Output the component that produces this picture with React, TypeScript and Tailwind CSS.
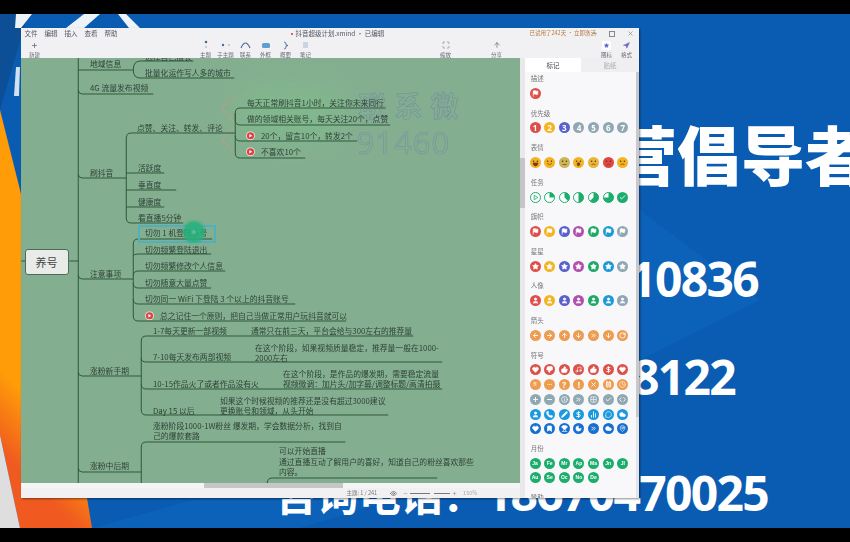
import { ReactNode } from 'react';
import {
  ArrowDown, ArrowLeft, ArrowRight, ArrowUp, BarChart2, Bookmark, Check, ChevronsRight, Clock, Cloud, Code,
  DollarSign, Eye, Flag, Grid2x2, Heart, Info, Maximize, MapPin, MessageCircle, Minus, Moon, Music, Navigation,
  Pause, Pencil, Phone, Plus, RotateCw, Star, ThumbsDown, ThumbsUp, Trophy, User, X,
} from 'lucide-react';

const cjk = "font-['Noto_Sans_CJK_SC','Noto_Sans',sans-serif]";

const RAINBOW = ['#df4f4a', '#f4b320', '#5a60cc', '#b04fae', '#1fa967', '#1c9ad8', '#8ea7b2'];
const RED = '#dc5149';
const ORANGE = '#ee9c50';
const GRAY = '#8fa8b2';
const BLUE = '#1a98e0';
const NAVY = '#1670d0';
const GREEN = '#1cad6c';

type MapText = { x: number; y: number; lines: string[]; mark?: boolean };

const TEXTS: MapText[] = [
  { x: 145, y: 57, lines: ['选择自己擅长'] },
  { x: 90, y: 64, lines: ['地域信息'] },
  { x: 145, y: 73, lines: ['批量化运作写人多的城市'] },
  { x: 90, y: 88, lines: ['4G 流量发布视频'] },
  { x: 247, y: 103, lines: ['每天正常刷抖音1小时，关注你未来同行'] },
  { x: 247, y: 119, lines: ['做的领域相关账号，每天关注20个，点赞'] },
  { x: 137, y: 128, lines: ['点赞、关注、转发、评论'] },
  { x: 261, y: 136, lines: ['20个，留言10个，转发2个'], mark: true },
  { x: 261, y: 152, lines: ['不喜欢10个'], mark: true },
  { x: 138, y: 168, lines: ['活跃度'] },
  { x: 90, y: 173, lines: ['刷抖音'] },
  { x: 138, y: 185, lines: ['垂直度'] },
  { x: 138, y: 202, lines: ['健康度'] },
  { x: 138, y: 218, lines: ['看直播5分钟'] },
  { x: 145, y: 233, lines: ['切勿 1 机登陆多号'] },
  { x: 145, y: 250, lines: ['切勿频繁登陆退出'] },
  { x: 145, y: 266, lines: ['切勿频繁修改个人信息'] },
  { x: 90, y: 274, lines: ['注意事项'] },
  { x: 145, y: 283, lines: ['切勿随意大量点赞'] },
  { x: 145, y: 299, lines: ['切勿同一 WiFi 下登陆 3 个以上的抖音账号'] },
  { x: 160, y: 315.5, lines: ['总之记住一个原则，把自己当做正常用户玩抖音就可以'], mark: true },
  { x: 153, y: 331, lines: ['1-7每天更新一部视频'] },
  { x: 251, y: 331, lines: ['通常只在前三天，平台会给与300左右的推荐量'] },
  { x: 255, y: 352.5, lines: ['在这个阶段，如果视频质量稳定，推荐量一般在1000-', '2000左右'] },
  { x: 153, y: 357, lines: ['7-10每天发布两部视频'] },
  { x: 90, y: 371, lines: ['涨粉新手期'] },
  { x: 283, y: 378.5, lines: ['在这个阶段，是作品的爆发期，需要稳定流量', '视频微调：加片头/加字幕/调整标题/高清拍摄'] },
  { x: 153, y: 384, lines: ['10-15作品火了或者作品没有火'] },
  { x: 220, y: 405.5, lines: ['如果这个时候视频的推荐还是没有超过3000建议', '更换账号和领域，从头开始'] },
  { x: 153, y: 411, lines: ['Day 15 以后'] },
  { x: 153, y: 430.5, lines: ['涨粉阶段1000-1W粉丝 爆发期，学会数据分析，找到自', '己的爆款套路'] },
  { x: 279, y: 462, lines: ['可以开始直播', '通过直播互动了解用户的喜好，知道自己的粉丝喜欢那些', '内容。'] },
  { x: 90, y: 466, lines: ['涨粉中后期'] },
];

const LINES = [
  'M78 58V484',
  'M69 261H78',
  'M21 261H25',
  'M78 70H133',
  'M133 70Q133 61 140 61H193',
  'M133 70Q133 78 140 78H234',
  'M78 90Q78 94 82 94H153',
  'M78 174Q78 178 82 178H126',
  'M126 178V138Q126 133 131 133H234',
  'M126 173H164',
  'M126 190H176',
  'M126 207H164',
  'M126 178V218Q126 223 131 223H183',
  'M234 133H235V113Q235 108 240 108H385',
  'M235 113V120Q235 125 240 125H390',
  'M235 133V136Q235 141 240 141H357',
  'M235 136V153Q235 158 240 158H305',
  'M78 275Q78 279 82 279H133',
  'M133 279V244Q133 239 138 239H212',
  'M133 256Q133 254 138 254H211',
  'M133 276Q133 271 138 271H225',
  'M133 283Q133 288 138 288H211',
  'M133 299Q133 304 138 304H295',
  'M133 279V316Q133 321 138 321H346',
  'M78 372Q78 376 82 376H141',
  'M141 376V341Q141 336 146 336H413',
  'M141 358Q141 362 146 362H442',
  'M141 384Q141 389 146 389H442',
  'M141 376V410Q141 415 146 415H388',
  'M78 468Q78 472 82 472H141',
  'M141 484V447Q141 442 146 442H345',
  'M267 484V483Q267 478 272 478H437',
];

const Dot = ({ color, children }: { color: string; children?: ReactNode }) => (
  <div className="flex h-[11px] w-[11px] items-center justify-center rounded-full text-white" style={{ backgroundColor: color }}>
    {children}
  </div>
);

const Num = ({ children }: { children: ReactNode }) => (
  <span className="text-[8px] leading-none font-bold font-['Open_Sans',sans-serif]">{children}</span>
);

const Small = ({ children }: { children: ReactNode }) => (
  <span className="text-[5px] leading-none font-bold font-['Liberation_Sans',sans-serif]">{children}</span>
);

const Face = ({ color = '#f4b320', mouth, smile = true }: { color?: string; mouth: string; smile?: boolean }) => (
  <svg width="11" height="11" viewBox="0 0 11 11">
    <circle cx="5.5" cy="5.5" r="5.5" fill={color} />
    <circle cx="3.6" cy="4.2" r="0.8" fill="#5a3a10" />
    <circle cx="7.4" cy="4.2" r="0.8" fill="#5a3a10" />
    <path d={mouth} fill={smile ? '#7a3a18' : 'none'} stroke="#7a3a18" strokeWidth="0.7" />
  </svg>
);

const Pie = ({ part }: { part: number }) => {
  const a = part * 2 * Math.PI;
  const x = 5.5 + 5 * Math.sin(a);
  const y = 5.5 - 5 * Math.cos(a);
  return (
    <svg width="11" height="11" viewBox="0 0 11 11">
      <circle cx="5.5" cy="5.5" r="5" fill="#fff" stroke={GREEN} strokeWidth="1" />
      <path d={`M5.5 5.5V.5A5 5 0 ${part > 0.5 ? 1 : 0} 1 ${x} ${y}Z`} fill={GREEN} />
    </svg>
  );
};

const ic = { size: 7, strokeWidth: 3 };
const fill = { size: 7, strokeWidth: 2, fill: '#fff' };

const rainbow = (node: ReactNode) => RAINBOW.map((c, i) => <Dot key={i} color={c}>{node}</Dot>);
const solid = (color: string, nodes: ReactNode[]) => nodes.map((n, i) => <Dot key={i} color={color}>{n}</Dot>);

const SECTIONS: { label: string; items: ReactNode[] }[] = [
  { label: '描述', items: [<Dot key="f" color={RED}><Flag {...fill} /></Dot>] },
  {
    label: '优先级',
    items: ['#df4f4a', '#f4b320', '#5a60cc', GRAY, GRAY, GRAY, GRAY].map((c, i) => (
      <Dot key={i} color={c}><Num>{i + 1}</Num></Dot>
    )),
  },
  {
    label: '表情',
    items: [
      <Face key="1" mouth="M3 6H8Q7.5 9 5.5 9T3 6Z" />,
      <Face key="2" mouth="M3.2 6.5Q5.5 8.6 7.8 6.5" smile={false} />,
      <Face key="3" color="#cbb45a" mouth="M3.5 7.5H7.5" smile={false} />,
      <Face key="4" mouth="M4.2 7.2A1.3 1.6 0 1 0 6.8 7.2A1.3 1.6 0 1 0 4.2 7.2Z" />,
      <Face key="5" color="#e7b53c" mouth="M3.5 7.6Q5.5 6.4 7.5 7.6" smile={false} />,
      <Face key="6" color="#e2453f" mouth="M3.5 8Q5.5 6.4 7.5 8" smile={false} />,
      <Face key="7" mouth="M3.5 7.2H7.5" smile={false} />,
    ],
  },
  {
    label: '任务',
    items: [
      <svg key="0" width="11" height="11" viewBox="0 0 11 11">
        <circle cx="5.5" cy="5.5" r="5" fill="#fff" stroke={GREEN} strokeWidth="1" />
        <path d="M4.2 3.2L7.8 5.5L4.2 7.8Z" fill="none" stroke={GREEN} strokeWidth="0.8" />
      </svg>,
      <Pie key="1" part={0.25} />,
      <Pie key="2" part={0.375} />,
      <Pie key="3" part={0.5} />,
      <Pie key="4" part={0.625} />,
      <Pie key="5" part={0.75} />,
      <Dot key="6" color={GREEN}><Check {...ic} /></Dot>,
    ],
  },
  { label: '旗帜', items: rainbow(<Flag {...fill} />) },
  { label: '星星', items: rainbow(<Star {...fill} />) },
  { label: '人像', items: rainbow(<User {...fill} />) },
  {
    label: '箭头',
    items: solid(ORANGE, [
      <ArrowLeft key="1" {...ic} />, <ArrowRight key="2" {...ic} />, <ArrowUp key="3" {...ic} />, <ArrowDown key="4" {...ic} />,
      <ChevronsRight key="5" {...ic} />, <ArrowDown key="6" {...ic} />, <RotateCw key="7" {...ic} />,
    ]),
  },
  {
    label: '符号',
    items: [
      ...solid(RED, [
        <Heart key="1" {...fill} />, <ThumbsDown key="2" {...fill} />, <ThumbsUp key="3" {...fill} />, <Music key="4" {...ic} strokeWidth={2} />,
        <ThumbsUp key="5" {...fill} />, <DollarSign key="6" {...ic} />, <Heart key="7" {...fill} />,
      ]),
      ...solid(ORANGE, [
        <Small key="1">!!</Small>, <Small key="2">···</Small>, <Num key="3">?</Num>, <Num key="4">!</Num>,
        <X key="5" {...ic} />, <Pause key="6" {...ic} />, <Clock key="7" size={7} strokeWidth={2} />,
      ]),
      ...solid(GRAY, [
        <Plus key="1" {...ic} />, <Minus key="2" {...ic} />, <Info key="3" size={7} strokeWidth={2.5} />, <ChevronsRight key="4" {...ic} />,
        <Grid2x2 key="5" size={7} strokeWidth={2} />, <Check key="6" {...ic} />, <Code key="7" {...ic} />,
      ]),
      ...solid(BLUE, [
        <User key="1" {...fill} />, <Phone key="2" {...fill} />, <Pencil key="3" {...fill} />, <DollarSign key="4" {...ic} />,
        <BarChart2 key="5" {...ic} />, <MessageCircle key="6" {...ic} strokeWidth={2} />, <Cloud key="7" {...fill} />,
      ]),
      ...solid(NAVY, [
        <Heart key="1" {...fill} />, <Bookmark key="2" {...fill} />, <Trophy key="3" {...fill} />, <Moon key="4" {...fill} />,
        <ChevronsRight key="5" {...ic} />, <Cloud key="6" {...fill} />, <MapPin key="7" {...ic} strokeWidth={2} />,
      ]),
    ],
  },
  {
    label: '月份',
    items: ['Ja', 'Fe', 'Mr', 'Ap', 'Ma', 'Jn', 'Jl', 'Au', 'Se', 'Oc', 'No', 'De'].map((m) => (
      <Dot key={m} color={GREEN}><Small>{m}</Small></Dot>
    )),
  },
  { label: '赞助', items: [] },
];

const Tool = ({ label, icon, className = '' }: { label: string; icon: ReactNode; className?: string }) => (
  <div className={`flex w-[20px] shrink-0 flex-col items-center ${className}`}>
    <div className="flex h-[10px] items-center justify-center text-[#56657a]">{icon}</div>
    <span className="mt-[2px] text-[5.5px] leading-[6px] whitespace-nowrap text-[#667]">{label}</span>
  </div>
);

const Mark = () => (
  <svg width="9" height="9" viewBox="0 0 9 9" className="absolute top-1/2 -left-[15px] -translate-y-1/2">
    <circle cx="4.5" cy="4.5" r="4.5" fill="#e8dcd0" />
    <circle cx="4.5" cy="4.5" r="3.6" fill="#dc4347" />
    <path d="M3.4 2.7L6.2 4.5L3.4 6.3Z" fill="#fff" />
  </svg>
);

const MindMap = () => (
  <div className="relative h-full w-full overflow-hidden bg-[#84ae90]">
    {/* faded watermark blobs */}
    <div className="absolute top-[25px] left-[215px] h-[60px] w-[110px] rounded-full bg-[#7fc48a] opacity-40 blur-md" />
    <svg viewBox="21 58 499 425" className="absolute inset-0 h-full w-full" fill="none">
      <path d="M234 95L222 108L234 122M236 125L222 140L236 155" stroke="#c99a80" strokeWidth="1.5" opacity="0.5" />
      {LINES.map((d, i) => (
        <path key={i} d={d} stroke="#2c5a3a" strokeWidth="1" />
      ))}
    </svg>
    <div className="absolute top-[167px] left-[117px] h-[18px] w-[78px] border-2 border-[#4fb0c0]" />
    <div className={`absolute top-[33px] left-[338px] flex gap-[8px] text-[28px] leading-none font-bold text-transparent opacity-60 [-webkit-text-stroke:0.7px_#6b7fa8] ${cjk}`}>
      <span>联</span><span>系</span><span>微</span>
    </div>
    <div className="absolute top-[69px] left-[336px] text-[31px] leading-none tracking-[1px] text-transparent opacity-70 [-webkit-text-stroke:0.7px_#708aa4] font-['Open_Sans',sans-serif]">
      91460
    </div>
    {TEXTS.map((t) => (
      <div
        key={t.lines[0]}
        className={`absolute -translate-y-1/2 text-[7.8px] leading-[10.5px] whitespace-nowrap text-[#2e4236] ${cjk}`}
        style={{ left: t.x - 20.5, top: t.y - 58 }}
      >
        {t.mark && <Mark />}
        {t.lines.map((l) => (
          <div key={l}>{l}</div>
        ))}
      </div>
    ))}
    <div className="absolute top-[163px] left-[162px] flex h-[22px] w-[22px] items-center justify-center rounded-full bg-[#22b27c]/85 blur-[1px]">
      <div className="h-[2px] w-[2px] rounded-full bg-white" />
    </div>
    <div className={`absolute top-[191px] left-[4px] flex h-[26px] w-[44px] items-center justify-center rounded-[3px] border border-[#4f6a58] bg-[#e9ebe8] text-[11px] text-[#444] ${cjk}`}>
      养号
    </div>
  </div>
);

const Sidebar = () => (
  <div className="flex w-[114px] shrink-0 flex-col bg-[#f8f8fa]">
    <div className="flex h-[14px] shrink-0 bg-[#efeff1] text-[6.5px] leading-[14px]">
      <div className="w-[56px] bg-white text-center text-[#444]">标记</div>
      <div className="flex-1 text-center text-[#aaa]">贴纸</div>
    </div>
    <div className="flex min-h-0 flex-1 overflow-hidden">
      <div className="min-w-0 flex-1 pt-[1px] pl-[2.7px]">
        {SECTIONS.map((s) => (
          <div key={s.label} className="pb-[6.9px]">
            <div className="h-[10px] pl-[3px] text-[6.5px] leading-[10px] text-[#777]">{s.label}</div>
            <div className="grid grid-cols-[repeat(7,14.65px)] auto-rows-[14.7px] place-items-center pt-[3px]">{s.items}</div>
          </div>
        ))}
      </div>
      <div className="w-[3px] shrink-0 bg-[#e4e4e6]">
        <div className="h-[345px] bg-[#c9c9cc]" />
      </div>
    </div>
  </div>
);

const Window = () => (
  <div className={`absolute top-[28px] left-[20.5px] flex h-[470px] w-[618.5px] flex-col bg-[#f1f1f3] shadow-[1px_1px_2px_rgba(0,0,0,0.45)] blur-[0.35px] ${cjk}`}>
    <div className="flex h-[11px] shrink-0 items-center text-[6.5px] whitespace-nowrap text-[#556]">
      <div className="flex w-[270px] shrink-0 gap-[7px] pl-[4px]">
        <span>文件</span><span>编辑</span><span>插入</span><span>查看</span><span>帮助</span>
      </div>
      <div className="flex w-[239px] shrink-0 items-center gap-[3px]">
        <div className="h-[2px] w-[2px] rounded-full bg-[#d33]" />
        <span>抖音超级计划.xmind · 已编辑</span>
      </div>
      <span className="w-[60px] shrink-0 text-[5.5px] text-[#b8783a]">已试用了242天 · 立即激活</span>
      <Minus size={7} className="ml-[1px] text-[#777]" />
      <div className="ml-[11px] h-[6px] w-[6px] border border-[#888]" />
      <X size={7} className="ml-[12px] text-[#777]" />
    </div>
    <div className="flex h-[19px] shrink-0 items-start pt-[1px] pl-[4px]">
      <Tool label="新建" icon={<Plus size={7} strokeWidth={2.5} />} />
      <Tool className="ml-[151px]" label="主题" icon={<svg width="8" height="10"><circle cx="4" cy="2" r="1.3" fill="#4a6d96" /><circle cx="4" cy="7" r="1" fill="#b5c0cc" /></svg>} />
      <Tool label="子主题" icon={<svg width="12" height="8"><circle cx="3" cy="4" r="1.2" fill="#4a6d96" /><circle cx="9" cy="4" r="1" fill="#b5c0cc" /></svg>} />
      <Tool label="联系" icon={<svg width="11" height="8" fill="none"><path d="M1 7Q5.5 -3 10 7" stroke="#4a6d96" strokeWidth="1.2" /></svg>} />
      <Tool label="外框" icon={<svg width="10" height="7"><rect x="1" y="1" width="8" height="5" rx="1.5" fill="#5f9fd0" /></svg>} />
      <Tool label="概要" icon={<svg width="6" height="9" fill="none"><path d="M1 1Q3 1 3 3V4L5 4.5L3 5V6Q3 8 1 8" stroke="#4a6d96" strokeWidth="0.9" /></svg>} />
      <Tool label="笔记" icon={<svg width="7" height="8"><rect x="1" y="1" width="5" height="6" fill="#c9d6e2" /></svg>} />
      <Tool className="ml-[120px]" label="缩放" icon={<Maximize size={8} strokeWidth={1.5} />} />
      <Tool className="ml-[31px]" label="分享" icon={<ArrowUp size={8} strokeWidth={2} />} />
      <Tool className="ml-[90px]" label="图标" icon={<div className="flex h-[9px] w-[9px] items-center justify-center rounded-[1px] bg-white"><Star size={5} fill="#5a60cc" stroke="#5a60cc" /></div>} />
      <Tool label="格式" icon={<Navigation size={7} fill="#6a66c8" stroke="#6a66c8" />} />
    </div>
    <div className="flex min-h-0 flex-1">
      <div className="flex min-w-0 flex-1 flex-col">
        <div className="flex min-h-0 flex-1">
          <div className="min-w-0 flex-1">
            <MindMap />
          </div>
        </div>
        <div className="relative h-[5px] shrink-0 bg-[#f5f5f7]">
          <div className="absolute left-[183px] h-full w-[139px] bg-[#c6c6c9]" />
        </div>
        <div className="flex h-[10px] shrink-0 items-center text-[5.5px] whitespace-nowrap text-[#777]">
          <span className="ml-[326px]">主题: 1 / 241</span>
          <Eye size={7} className="ml-[13px] text-[#555]" />
          <Minus size={5} className="ml-[6px]" />
          <div className="ml-[2px] h-px w-[20px] bg-[#777]" />
          <div className="ml-[4px] h-px w-[16px] bg-[#777]" />
          <Plus size={5} className="ml-[2px]" />
          <span className="ml-[6px] text-[#aaa]">150%</span>
        </div>
      </div>
      <div className="w-[5px] shrink-0 bg-[#e9e9ec]">
        <div className="mt-[100px] h-[50px] bg-[#c6c6c9]" />
      </div>
      <Sidebar />
    </div>
  </div>
);

const Backdrop = () => (
  <svg viewBox="0 0 850 542" className="absolute inset-0 h-full w-full">
    <defs>
      <linearGradient id="orange" gradientUnits="userSpaceOnUse" x1="0" y1="450" x2="40" y2="410">
        <stop offset="0" stopColor="#f05a20" />
        <stop offset="1" stopColor="#ff9c08" />
      </linearGradient>
    </defs>
    <rect x="0" y="14" width="850" height="514" fill="#0a5cb2" />
    <path d="M0 14H28L0 110Z" fill="#0d4f96" />
    <path d="M0 110L20 190L87 498L92 528H20L0 435Z" fill="url(#orange)" />
    <path d="M0 435L20 528H0Z" fill="#dedede" />
    <path d="M640 210L760 300L640 360ZM92 528L200 498H400L300 528Z" fill="#0e66bd" opacity="0.5" />
    <path d="M16 14H32L21 28H15ZM66 28L84 14H100L84 28ZM118 14H126L140 28H129Z" fill="#eef3f8" />
    <path d="M16 67H20L19 96H14Z" fill="#e8eef5" opacity="0.9" />
  </svg>
);

export default function App() {
  const bigNum = "absolute text-[48px] leading-none font-bold tracking-[-1.7px] text-white font-['Open_Sans',sans-serif]";
  return (
    <div className="relative h-[542px] w-[850px] overflow-hidden bg-black">
      <Backdrop />
      <div className={`absolute top-[120px] left-[613px] text-[64px] leading-none font-black whitespace-nowrap text-white ${cjk}`}>
        营倡导者
      </div>
      <div className={`${bigNum} top-[255px] right-[92px]`}>10836</div>
      <div className={`${bigNum} top-[353px] right-[115px]`}>8122</div>
      <div className={`${bigNum} top-[469px] right-[82px] flex items-center whitespace-nowrap`}>
        <span className={`${cjk} text-[42px] tracking-[0px]`}>咨询电话：</span>18670470025
      </div>
      <Window />
      <div className="absolute top-0 left-0 h-[14px] w-full bg-black" />
      <div className="absolute top-[528px] left-0 h-[14px] w-full bg-black" />
    </div>
  );
}
